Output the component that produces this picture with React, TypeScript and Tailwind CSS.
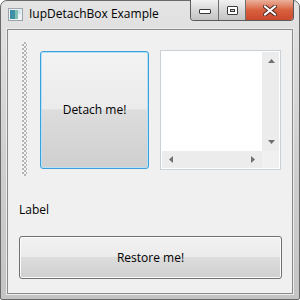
import React from "react";

const ui = "font-['Segoe_UI','Open_Sans','Noto_Sans',sans-serif]";

function AppIcon() {
  return (
    <svg width="15" height="13" viewBox="0 0 15 13">
      <rect x="0.5" y="0.5" width="14" height="12" fill="#eef2f4" stroke="#9aa4aa" />
      <rect x="2" y="2" width="5" height="9" fill="#3f8fa8" />
      <rect x="7" y="2" width="3" height="9" fill="#7fc0b0" />
      <rect x="10" y="2" width="3" height="4" fill="#cfe3ea" />
    </svg>
  );
}

function CaptionButtons() {
  return (
    <div className="flex h-[21px] -mt-px overflow-hidden rounded-b-[4px] border border-[#5a5a5a] border-t-0">
      <div className="flex w-[28px] items-center justify-center border-r border-[#6e6e6e] bg-gradient-to-b from-[#f2f2f2] via-[#d8d8d8] to-[#c4c4c4]">
        <div className="mt-[3px] h-[5px] w-[12px] rounded-[1px] border border-[#3a3a3a] bg-white" />
      </div>
      <div className="flex w-[27px] items-center justify-center border-r border-[#6e6e6e] bg-gradient-to-b from-[#f2f2f2] via-[#d8d8d8] to-[#c4c4c4]">
        <div className="flex h-[9px] w-[11px] items-center justify-center rounded-[1px] border border-[#3a3a3a] bg-white">
          <div className="h-[3px] w-[5px] border border-[#3a3a3a] bg-[#cfcfcf]" />
        </div>
      </div>
      <div className="flex w-[47px] items-center justify-center bg-gradient-to-b from-[#eab09a] via-[#d8613f] to-[#c9492c]">
        <svg width="14" height="11" viewBox="0 0 14 11">
          <path d="M2 1.5 L12 9.5 M12 1.5 L2 9.5" stroke="#4a2a24" strokeWidth="4" strokeLinecap="square" />
          <path d="M2 1.5 L12 9.5 M12 1.5 L2 9.5" stroke="#ffffff" strokeWidth="2" strokeLinecap="square" />
        </svg>
      </div>
    </div>
  );
}

function TextBox() {
  return (
    <div className="flex h-[120px] w-[121px] flex-col border border-[#c9d0d6] bg-white p-px">
      <div className="flex flex-1">
        <div className="flex-1 bg-white" />
        <div className="flex w-[17px] flex-col items-center justify-between border-l border-[#ececec] bg-[#ececec] py-[7px]">
          <svg width="7" height="4" viewBox="0 0 7 4"><path d="M0 4 L3.5 0 L7 4 Z" fill="#6f6f6f" /></svg>
          <svg width="7" height="4" viewBox="0 0 7 4"><path d="M0 0 L7 0 L3.5 4 Z" fill="#6f6f6f" /></svg>
        </div>
      </div>
      <div className="flex h-[17px]">
        <div className="flex flex-1 items-center justify-between bg-[#ececec] px-[7px]">
          <svg width="4" height="7" viewBox="0 0 4 7"><path d="M4 0 L0 3.5 L4 7 Z" fill="#6f6f6f" /></svg>
          <svg width="4" height="7" viewBox="0 0 4 7"><path d="M0 0 L4 3.5 L0 7 Z" fill="#6f6f6f" /></svg>
        </div>
        <div className="w-[17px] bg-[#f0f0f0]" />
      </div>
    </div>
  );
}

export default function App() {
  return (
    <div className={`${ui} h-[300px] w-[300px] bg-white text-[12px] text-black`}>
      <div className="flex h-full w-full flex-col rounded-t-[7px] rounded-b-[2px] border border-[#6a6a6a] bg-gradient-to-b from-[#e4e4e4] via-[#d0d0d0] to-[#c4c4c4]">
        <div className="flex h-[28px] items-start">
          <div className="ml-[7px] mt-[7px]">
            <AppIcon />
          </div>
          <div className="ml-[6px] mt-[5px] leading-[16px]">IupDetachBox Example</div>
          <div className="ml-auto mr-[5px]">
            <CaptionButtons />
          </div>
        </div>
        <div className="mx-[6px] mb-[5px] flex flex-1 flex-col border border-[#8a8a8a] bg-[#f0f0f0] shadow-[0_0_0_1px_#ececec]">
          <div className="ml-[14px] mt-[12px] flex items-start">
            <div className="h-[134px] w-[5px] bg-[repeating-conic-gradient(#b4b4b4_0_25%,#f4f4f4_0_50%)] bg-[length:4px_4px]" />
            <div className="ml-[13px] mt-[9px] flex h-[118px] w-[109px] items-center justify-center rounded-[3px] border border-[#3c9fdc] bg-[linear-gradient(#f3f3f3,#ebebeb_49%,#dddddd_50%,#cfcfcf)] shadow-[inset_0_0_0_1px_#b6e2f8]">
              Detach me!
            </div>
            <div className="ml-[11px] mt-[8px]">
              <TextBox />
            </div>
          </div>
          <div className="ml-[11px] mt-[26px] leading-[16px]">Label</div>
          <div className="ml-[11px] mt-[18px] flex h-[43px] w-[263px] items-center justify-center rounded-[3px] border border-[#707070] bg-[linear-gradient(#f2f2f2,#ebebeb_49%,#dddddd_50%,#cfcfcf)] shadow-[inset_0_0_0_1px_#fcfcfc]">
            Restore me!
          </div>
        </div>
      </div>
    </div>
  );
}
